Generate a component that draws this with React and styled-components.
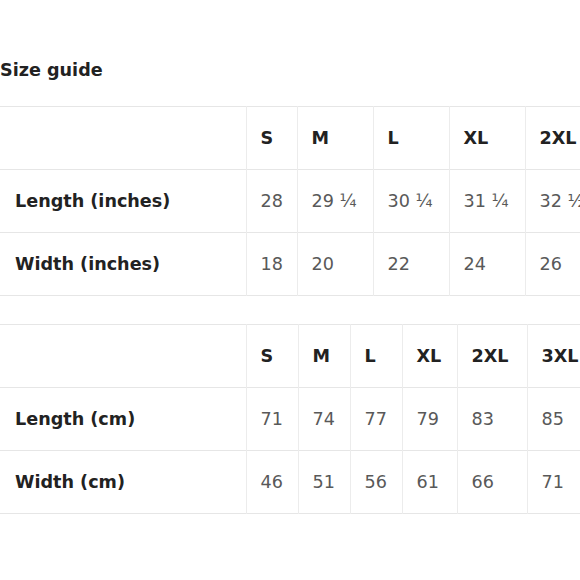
import React from "react";
import styled, { createGlobalStyle } from "styled-components";

const Global = createGlobalStyle`
  html, body { margin: 0; padding: 0; background: #fff; }
  body { font-family: "DejaVu Sans", Verdana, sans-serif; }
`;

const Page = styled.div`
  width: 580px;
  height: 580px;
  overflow: hidden;
  padding-top: 60px;
  box-sizing: border-box;
  display: flex;
  flex-direction: column;
`;

const Title = styled.h2`
  margin: 0 0 26px 0;
  font-size: 17.6px;
  line-height: 20px;
  font-weight: bold;
  color: #222;
`;

const Table = styled.table`
  border-collapse: collapse;
  table-layout: fixed;
  width: ${(p) => p.$width}px;
  margin-bottom: ${(p) => p.$gap}px;
  border-top: 1px solid #e6e6e6;
`;

const Row = styled.tr`
  height: 63px;
  border-bottom: 1px solid #e6e6e6;
`;

const Cell = styled.td`
  padding: 0 0 0 14px;
  border-right: 1px solid #ececec;
  font-size: 17.6px;
  white-space: nowrap;
  overflow: hidden;
  vertical-align: middle;
  color: ${(p) => (p.$head ? "#222" : "#595959")};
  font-weight: ${(p) => (p.$head ? "bold" : "normal")};
`;

const LabelCell = styled(Cell)`
  padding-left: 15px;
  color: #222;
  font-weight: bold;
`;

const tables = [
  {
    cols: [246, 51, 76, 76, 76, 80],
    sizes: ["S", "M", "L", "XL", "2XL"],
    rows: [
      ["Length (inches)", ["28", "29 ¼", "30 ¼", "31 ¼", "32 ½"]],
      ["Width (inches)", ["18", "20", "22", "24", "26"]],
    ],
    gap: 28,
  },
  {
    cols: [246, 52, 52, 52, 55, 70, 70],
    sizes: ["S", "M", "L", "XL", "2XL", "3XL"],
    rows: [
      ["Length (cm)", ["71", "74", "77", "79", "83", "85"]],
      ["Width (cm)", ["46", "51", "56", "61", "66", "71"]],
    ],
    gap: 0,
  },
];

function SizeTable({ cols, sizes, rows, gap }) {
  const width = cols.reduce((a, b) => a + b, 0);
  return (
    <Table $width={width} $gap={gap}>
      <colgroup>
        {cols.map((w, i) => (
          <col key={i} style={{ width: w }} />
        ))}
      </colgroup>
      <tbody>
        <Row>
          <LabelCell />
          {sizes.map((s) => (
            <Cell key={s} $head>
              {s}
            </Cell>
          ))}
        </Row>
        {rows.map(([label, vals]) => (
          <Row key={label}>
            <LabelCell>{label}</LabelCell>
            {vals.map((v, i) => (
              <Cell key={i}>{v}</Cell>
            ))}
          </Row>
        ))}
      </tbody>
    </Table>
  );
}

export default function App() {
  return (
    <>
      <Global />
      <Page>
        <Title>Size guide</Title>
        {tables.map((t, i) => (
          <SizeTable key={i} {...t} />
        ))}
      </Page>
    </>
  );
}
